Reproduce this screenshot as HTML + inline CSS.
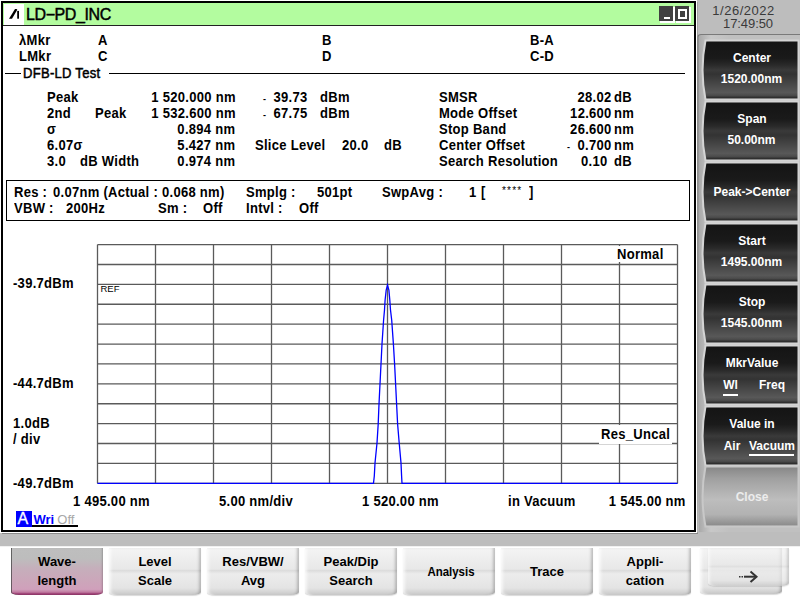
<!DOCTYPE html>
<html><head><meta charset="utf-8"><style>
html,body{margin:0;padding:0;}
body{width:800px;height:600px;overflow:hidden;position:relative;font-family:"Liberation Sans", sans-serif;background:#bdbdbd;}
.r{position:absolute;}
.t{position:absolute;white-space:pre;}
</style></head><body>
<div class="r" style="left:0px;top:0px;width:697px;height:533px;background:#fff;"></div>
<div class="r" style="left:697px;top:2px;width:1px;height:532px;background:#a4a4a4;"></div>
<div class="r" style="left:2px;top:533px;width:696px;height:1px;background:#8a8a8a;"></div>
<div class="r" style="left:1px;top:1px;width:695px;height:531px;border:2px solid #000;box-sizing:border-box;background:#fff;"></div>
<div class="r" style="left:3px;top:3px;width:691px;height:22px;background:#b3fc9f;"></div>
<div class="r" style="left:3px;top:25px;width:691px;height:1px;background:#222;"></div>
<div class="r" style="left:4px;top:4px;width:20px;height:21px;background:#fff;"></div>
<svg class="r" style="left:0;top:0" width="800" height="600"><polygon points="9,18.7 12,18.7 17.3,9.8 16.6,8.9 15,8.9" fill="#000"/><rect x="17.2" y="10.9" width="1.8" height="7.8" fill="#000"/></svg>
<div class="r" style="left:660px;top:7px;width:15px;height:15.5px;background:#fff;"></div>
<div class="r" style="left:659px;top:6px;width:14px;height:15px;background:#404040;"></div>
<div class="r" style="left:664px;top:17px;width:6px;height:2px;background:#fff;"></div>
<div class="r" style="left:676px;top:7px;width:15px;height:15.5px;background:#fff;"></div>
<div class="r" style="left:675px;top:6px;width:14px;height:15px;background:#404040;"></div>
<div class="r" style="left:678px;top:9px;width:9px;height:10px;border:2px solid #fff;box-sizing:border-box;"></div>
<div class="t" style="top:7px;font-size:16px;line-height:16px;font-weight:normal;color:#000;letter-spacing:-0.4px;left:26px;-webkit-text-stroke:0.45px #000;">LD&#8722;PD_INC</div>
<div class="t" style="top:4px;font-size:13px;line-height:13px;font-weight:normal;color:#3a3a3a;letter-spacing:0.5px;left:593.5px;width:300px;text-align:center;">1/26/2022</div>
<div class="t" style="top:17px;font-size:13px;line-height:13px;font-weight:normal;color:#3a3a3a;letter-spacing:-0.1px;left:598px;width:300px;text-align:center;">17:49:50</div>
<div class="t" style="top:33px;font-size:14px;line-height:14px;font-weight:bold;color:#000;letter-spacing:0.3px;left:18.5px;transform:scaleX(0.93);transform-origin:left 50%;">&#955;Mkr</div>
<div class="t" style="top:49px;font-size:14px;line-height:14px;font-weight:bold;color:#000;letter-spacing:0.3px;left:18.5px;transform:scaleX(0.93);transform-origin:left 50%;">LMkr</div>
<div class="t" style="top:33px;font-size:14px;line-height:14px;font-weight:bold;color:#000;letter-spacing:0.3px;left:97.5px;transform:scaleX(0.93);transform-origin:left 50%;">A</div>
<div class="t" style="top:49px;font-size:14px;line-height:14px;font-weight:bold;color:#000;letter-spacing:0.3px;left:97.5px;transform:scaleX(0.93);transform-origin:left 50%;">C</div>
<div class="t" style="top:33px;font-size:14px;line-height:14px;font-weight:bold;color:#000;letter-spacing:0.3px;left:321.5px;transform:scaleX(0.93);transform-origin:left 50%;">B</div>
<div class="t" style="top:49px;font-size:14px;line-height:14px;font-weight:bold;color:#000;letter-spacing:0.3px;left:321.5px;transform:scaleX(0.93);transform-origin:left 50%;">D</div>
<div class="t" style="top:33px;font-size:14px;line-height:14px;font-weight:bold;color:#000;letter-spacing:0.3px;left:529.5px;transform:scaleX(0.93);transform-origin:left 50%;">B-A</div>
<div class="t" style="top:49px;font-size:14px;line-height:14px;font-weight:bold;color:#000;letter-spacing:0.3px;left:529.5px;transform:scaleX(0.93);transform-origin:left 50%;">C-D</div>
<div class="r" style="left:5px;top:73px;width:16px;height:1px;background:#000;"></div>
<div class="r" style="left:109px;top:73px;width:576px;height:1px;background:#000;"></div>
<div class="t" style="top:66px;font-size:14px;line-height:14px;font-weight:normal;color:#000;letter-spacing:0.3px;left:22.5px;transform:scaleX(0.93);transform-origin:left 50%;-webkit-text-stroke:0.5px #000;">DFB-LD Test</div>
<div class="t" style="top:90px;font-size:14px;line-height:14px;font-weight:bold;color:#000;letter-spacing:0.3px;left:47.0px;transform:scaleX(0.93);transform-origin:left 50%;">Peak</div>
<div class="t" style="top:106px;font-size:14px;line-height:14px;font-weight:bold;color:#000;letter-spacing:0.3px;left:47.0px;transform:scaleX(0.93);transform-origin:left 50%;">2nd</div>
<div class="t" style="top:106px;font-size:14px;line-height:14px;font-weight:bold;color:#000;letter-spacing:0.3px;left:95.0px;transform:scaleX(0.93);transform-origin:left 50%;">Peak</div>
<div class="t" style="top:122px;font-size:14px;line-height:14px;font-weight:bold;color:#000;letter-spacing:0.3px;left:47.0px;transform:scaleX(0.93);transform-origin:left 50%;">&#963;</div>
<div class="t" style="top:138px;font-size:14px;line-height:14px;font-weight:bold;color:#000;letter-spacing:0.3px;left:47.0px;transform:scaleX(0.93);transform-origin:left 50%;">6.07&#963;</div>
<div class="t" style="top:154px;font-size:14px;line-height:14px;font-weight:bold;color:#000;letter-spacing:0.3px;left:47.0px;transform:scaleX(0.93);transform-origin:left 50%;">3.0</div>
<div class="t" style="top:154px;font-size:14px;line-height:14px;font-weight:bold;color:#000;letter-spacing:0.3px;left:79.5px;transform:scaleX(0.93);transform-origin:left 50%;">dB Width</div>
<div class="t" style="top:90px;font-size:14px;line-height:14px;font-weight:bold;color:#000;letter-spacing:0.3px;right:564.5px;transform:scaleX(0.93);transform-origin:right 50%;">1 520.000 nm</div>
<div class="t" style="top:106px;font-size:14px;line-height:14px;font-weight:bold;color:#000;letter-spacing:0.3px;right:564.5px;transform:scaleX(0.93);transform-origin:right 50%;">1 532.600 nm</div>
<div class="t" style="top:122px;font-size:14px;line-height:14px;font-weight:bold;color:#000;letter-spacing:0.3px;right:564.5px;transform:scaleX(0.93);transform-origin:right 50%;">0.894 nm</div>
<div class="t" style="top:138px;font-size:14px;line-height:14px;font-weight:bold;color:#000;letter-spacing:0.3px;right:564.5px;transform:scaleX(0.93);transform-origin:right 50%;">5.427 nm</div>
<div class="t" style="top:154px;font-size:14px;line-height:14px;font-weight:bold;color:#000;letter-spacing:0.3px;right:564.5px;transform:scaleX(0.93);transform-origin:right 50%;">0.974 nm</div>
<div class="t" style="top:95px;font-size:9px;line-height:9px;font-weight:bold;color:#000;letter-spacing:0.3px;left:263px;">-</div>
<div class="t" style="top:111px;font-size:9px;line-height:9px;font-weight:bold;color:#000;letter-spacing:0.3px;left:263px;">-</div>
<div class="t" style="top:90px;font-size:14px;line-height:14px;font-weight:bold;color:#000;letter-spacing:0.3px;right:492.5px;transform:scaleX(0.93);transform-origin:right 50%;">39.73</div>
<div class="t" style="top:106px;font-size:14px;line-height:14px;font-weight:bold;color:#000;letter-spacing:0.3px;right:492.5px;transform:scaleX(0.93);transform-origin:right 50%;">67.75</div>
<div class="t" style="top:90px;font-size:14px;line-height:14px;font-weight:bold;color:#000;letter-spacing:0.3px;left:319.5px;transform:scaleX(0.93);transform-origin:left 50%;">dBm</div>
<div class="t" style="top:106px;font-size:14px;line-height:14px;font-weight:bold;color:#000;letter-spacing:0.3px;left:319.5px;transform:scaleX(0.93);transform-origin:left 50%;">dBm</div>
<div class="t" style="top:138px;font-size:14px;line-height:14px;font-weight:bold;color:#000;letter-spacing:0.3px;left:255.0px;transform:scaleX(0.93);transform-origin:left 50%;">Slice Level</div>
<div class="t" style="top:138px;font-size:14px;line-height:14px;font-weight:bold;color:#000;letter-spacing:0.3px;right:431.5px;transform:scaleX(0.93);transform-origin:right 50%;">20.0</div>
<div class="t" style="top:138px;font-size:14px;line-height:14px;font-weight:bold;color:#000;letter-spacing:0.3px;left:383.5px;transform:scaleX(0.93);transform-origin:left 50%;">dB</div>
<div class="t" style="top:90px;font-size:14px;line-height:14px;font-weight:bold;color:#000;letter-spacing:0.3px;left:439.0px;transform:scaleX(0.93);transform-origin:left 50%;">SMSR</div>
<div class="t" style="top:106px;font-size:14px;line-height:14px;font-weight:bold;color:#000;letter-spacing:0.3px;left:439.0px;transform:scaleX(0.93);transform-origin:left 50%;">Mode Offset</div>
<div class="t" style="top:122px;font-size:14px;line-height:14px;font-weight:bold;color:#000;letter-spacing:0.3px;left:439.0px;transform:scaleX(0.93);transform-origin:left 50%;">Stop Band</div>
<div class="t" style="top:138px;font-size:14px;line-height:14px;font-weight:bold;color:#000;letter-spacing:0.3px;left:439.0px;transform:scaleX(0.93);transform-origin:left 50%;">Center Offset</div>
<div class="t" style="top:154px;font-size:14px;line-height:14px;font-weight:bold;color:#000;letter-spacing:0.3px;left:439.0px;transform:scaleX(0.93);transform-origin:left 50%;">Search Resolution</div>
<div class="t" style="top:90px;font-size:14px;line-height:14px;font-weight:bold;color:#000;letter-spacing:0.3px;right:188.5px;transform:scaleX(0.93);transform-origin:right 50%;">28.02</div>
<div class="t" style="top:90px;font-size:14px;line-height:14px;font-weight:bold;color:#000;letter-spacing:0.3px;left:613.5px;transform:scaleX(0.93);transform-origin:left 50%;">dB</div>
<div class="t" style="top:106px;font-size:14px;line-height:14px;font-weight:bold;color:#000;letter-spacing:0.3px;right:188.5px;transform:scaleX(0.93);transform-origin:right 50%;">12.600</div>
<div class="t" style="top:106px;font-size:14px;line-height:14px;font-weight:bold;color:#000;letter-spacing:0.3px;left:613.5px;transform:scaleX(0.93);transform-origin:left 50%;">nm</div>
<div class="t" style="top:122px;font-size:14px;line-height:14px;font-weight:bold;color:#000;letter-spacing:0.3px;right:188.5px;transform:scaleX(0.93);transform-origin:right 50%;">26.600</div>
<div class="t" style="top:122px;font-size:14px;line-height:14px;font-weight:bold;color:#000;letter-spacing:0.3px;left:613.5px;transform:scaleX(0.93);transform-origin:left 50%;">nm</div>
<div class="t" style="top:138px;font-size:14px;line-height:14px;font-weight:bold;color:#000;letter-spacing:0.3px;right:188.5px;transform:scaleX(0.93);transform-origin:right 50%;">0.700</div>
<div class="t" style="top:138px;font-size:14px;line-height:14px;font-weight:bold;color:#000;letter-spacing:0.3px;left:613.5px;transform:scaleX(0.93);transform-origin:left 50%;">nm</div>
<div class="t" style="top:143px;font-size:9px;line-height:9px;font-weight:bold;color:#000;letter-spacing:0.3px;left:567px;">-</div>
<div class="t" style="top:154px;font-size:14px;line-height:14px;font-weight:bold;color:#000;letter-spacing:0.3px;right:192.5px;transform:scaleX(0.93);transform-origin:right 50%;">0.10</div>
<div class="t" style="top:154px;font-size:14px;line-height:14px;font-weight:bold;color:#000;letter-spacing:0.3px;left:613.5px;transform:scaleX(0.93);transform-origin:left 50%;">dB</div>
<div class="r" style="left:6px;top:180px;width:684px;height:41px;border:1px solid #000;box-sizing:border-box;"></div>
<div class="t" style="top:185px;font-size:14px;line-height:14px;font-weight:bold;color:#000;letter-spacing:0.3px;left:14.25px;transform:scaleX(0.93);transform-origin:left 50%;">Res :</div>
<div class="t" style="top:185px;font-size:14px;line-height:14px;font-weight:bold;color:#000;letter-spacing:0.3px;left:53.0px;transform:scaleX(0.93);transform-origin:left 50%;">0.07nm (Actual :</div>
<div class="t" style="top:185px;font-size:14px;line-height:14px;font-weight:bold;color:#000;letter-spacing:0.3px;left:161.5px;transform:scaleX(0.93);transform-origin:left 50%;">0.068 nm)</div>
<div class="t" style="top:185px;font-size:14px;line-height:14px;font-weight:bold;color:#000;letter-spacing:0.3px;left:245.5px;transform:scaleX(0.93);transform-origin:left 50%;">Smplg :</div>
<div class="t" style="top:185px;font-size:14px;line-height:14px;font-weight:bold;color:#000;letter-spacing:0.3px;left:316.5px;transform:scaleX(0.93);transform-origin:left 50%;">501pt</div>
<div class="t" style="top:185px;font-size:14px;line-height:14px;font-weight:bold;color:#000;letter-spacing:0.3px;left:382.0px;transform:scaleX(0.93);transform-origin:left 50%;">SwpAvg :</div>
<div class="t" style="top:185px;font-size:14px;line-height:14px;font-weight:bold;color:#000;letter-spacing:0.3px;left:468.5px;transform:scaleX(0.93);transform-origin:left 50%;">1</div>
<div class="t" style="top:185px;font-size:14px;line-height:14px;font-weight:bold;color:#000;letter-spacing:0.3px;left:480.5px;transform:scaleX(0.93);transform-origin:left 50%;">[</div>
<div class="t" style="top:186px;font-size:10px;line-height:10px;font-weight:normal;color:#000;letter-spacing:1.2px;left:502px;">****</div>
<div class="t" style="top:185px;font-size:14px;line-height:14px;font-weight:bold;color:#000;letter-spacing:0.3px;left:529.0px;transform:scaleX(0.93);transform-origin:left 50%;">]</div>
<div class="t" style="top:201px;font-size:14px;line-height:14px;font-weight:bold;color:#000;letter-spacing:0.3px;left:14.25px;transform:scaleX(0.93);transform-origin:left 50%;">VBW :</div>
<div class="t" style="top:201px;font-size:14px;line-height:14px;font-weight:bold;color:#000;letter-spacing:0.3px;left:65.5px;transform:scaleX(0.93);transform-origin:left 50%;">200Hz</div>
<div class="t" style="top:201px;font-size:14px;line-height:14px;font-weight:bold;color:#000;letter-spacing:0.3px;left:157.5px;transform:scaleX(0.93);transform-origin:left 50%;">Sm :</div>
<div class="t" style="top:201px;font-size:14px;line-height:14px;font-weight:bold;color:#000;letter-spacing:0.3px;left:202.5px;transform:scaleX(0.93);transform-origin:left 50%;">Off</div>
<div class="t" style="top:201px;font-size:14px;line-height:14px;font-weight:bold;color:#000;letter-spacing:0.3px;left:245.5px;transform:scaleX(0.93);transform-origin:left 50%;">Intvl :</div>
<div class="t" style="top:201px;font-size:14px;line-height:14px;font-weight:bold;color:#000;letter-spacing:0.3px;left:299.0px;transform:scaleX(0.93);transform-origin:left 50%;">Off</div>
<svg class="r" style="left:0;top:0" width="800" height="600"><line x1="97.5" y1="244.60" x2="97.5" y2="483.30" stroke="#5a5a5a" stroke-width="1.3"/><line x1="155.5" y1="244.60" x2="155.5" y2="483.30" stroke="#5a5a5a" stroke-width="1.3"/><line x1="213.5" y1="244.60" x2="213.5" y2="483.30" stroke="#5a5a5a" stroke-width="1.3"/><line x1="271.5" y1="244.60" x2="271.5" y2="483.30" stroke="#5a5a5a" stroke-width="1.3"/><line x1="329.5" y1="244.60" x2="329.5" y2="483.30" stroke="#5a5a5a" stroke-width="1.3"/><line x1="387.5" y1="244.60" x2="387.5" y2="483.30" stroke="#5a5a5a" stroke-width="1.3"/><line x1="445.5" y1="244.60" x2="445.5" y2="483.30" stroke="#5a5a5a" stroke-width="1.3"/><line x1="503.5" y1="244.60" x2="503.5" y2="483.30" stroke="#5a5a5a" stroke-width="1.3"/><line x1="561.5" y1="244.60" x2="561.5" y2="483.30" stroke="#5a5a5a" stroke-width="1.3"/><line x1="619.5" y1="244.60" x2="619.5" y2="483.30" stroke="#5a5a5a" stroke-width="1.3"/><line x1="677.5" y1="244.60" x2="677.5" y2="483.30" stroke="#5a5a5a" stroke-width="1.3"/><line x1="97.5" y1="244.60" x2="677.5" y2="244.60" stroke="#5a5a5a" stroke-width="1.3"/><line x1="97.5" y1="264.49" x2="677.5" y2="264.49" stroke="#5a5a5a" stroke-width="1.3"/><line x1="97.5" y1="284.38" x2="677.5" y2="284.38" stroke="#5a5a5a" stroke-width="1.3"/><line x1="97.5" y1="304.27" x2="677.5" y2="304.27" stroke="#5a5a5a" stroke-width="1.3"/><line x1="97.5" y1="324.17" x2="677.5" y2="324.17" stroke="#5a5a5a" stroke-width="1.3"/><line x1="97.5" y1="344.06" x2="677.5" y2="344.06" stroke="#5a5a5a" stroke-width="1.3"/><line x1="97.5" y1="363.95" x2="677.5" y2="363.95" stroke="#5a5a5a" stroke-width="1.3"/><line x1="97.5" y1="383.84" x2="677.5" y2="383.84" stroke="#5a5a5a" stroke-width="1.3"/><line x1="97.5" y1="403.73" x2="677.5" y2="403.73" stroke="#5a5a5a" stroke-width="1.3"/><line x1="97.5" y1="423.62" x2="677.5" y2="423.62" stroke="#5a5a5a" stroke-width="1.3"/><line x1="97.5" y1="443.52" x2="677.5" y2="443.52" stroke="#5a5a5a" stroke-width="1.3"/><line x1="97.5" y1="463.41" x2="677.5" y2="463.41" stroke="#5a5a5a" stroke-width="1.3"/><line x1="97.5" y1="483.30" x2="677.5" y2="483.30" stroke="#5a5a5a" stroke-width="1.3"/></svg>
<div class="r" style="left:600px;top:245.5px;width:72px;height:16.5px;background:#fff;"></div>
<div class="r" style="left:599px;top:424.5px;width:73px;height:19px;background:#fff;"></div>
<div class="t" style="top:247px;font-size:14px;line-height:14px;font-weight:bold;color:#000;letter-spacing:0.3px;left:617.0px;transform:scaleX(0.93);transform-origin:left 50%;">Normal</div>
<div class="t" style="top:427px;font-size:14px;line-height:14px;font-weight:bold;color:#000;letter-spacing:0.3px;left:601.0px;transform:scaleX(0.93);transform-origin:left 50%;">Res_Uncal</div>
<div class="t" style="top:284px;font-size:9.5px;line-height:9.5px;font-weight:normal;color:#000;left:100.5px;">REF</div>
<svg class="r" style="left:0;top:0" width="800" height="600"><polyline points="97.5,483.3 373.5,483.3 374.3,476 375,463 377,443 378.2,424 379,404 380,384 381,364 382,344 383.6,320 384.5,310 385.1,300 386.2,290 387.5,285 388.9,290 389.8,300 390.5,310 391.7,320 393.4,344 394.6,364 395.6,384 396.6,404 397.6,424 399.2,443 401,463 401.6,476 402,483.3 677.5,483.3" fill="none" stroke="#0000ff" stroke-width="1.3"/></svg>
<div class="t" style="top:276px;font-size:14px;line-height:14px;font-weight:bold;color:#000;letter-spacing:0.3px;left:13.0px;transform:scaleX(0.93);transform-origin:left 50%;">-39.7dBm</div>
<div class="t" style="top:376px;font-size:14px;line-height:14px;font-weight:bold;color:#000;letter-spacing:0.3px;left:13.0px;transform:scaleX(0.93);transform-origin:left 50%;">-44.7dBm</div>
<div class="t" style="top:416px;font-size:14px;line-height:14px;font-weight:bold;color:#000;letter-spacing:0.3px;left:13.0px;transform:scaleX(0.93);transform-origin:left 50%;">1.0dB</div>
<div class="t" style="top:432px;font-size:14px;line-height:14px;font-weight:bold;color:#000;letter-spacing:0.3px;left:13.0px;transform:scaleX(0.93);transform-origin:left 50%;">/ div</div>
<div class="t" style="top:476px;font-size:14px;line-height:14px;font-weight:bold;color:#000;letter-spacing:0.3px;left:13.0px;transform:scaleX(0.93);transform-origin:left 50%;">-49.7dBm</div>
<div class="t" style="top:494px;font-size:14px;line-height:14px;font-weight:bold;color:#000;letter-spacing:0.3px;left:72.5px;transform:scaleX(0.93);transform-origin:left 50%;">1 495.00 nm</div>
<div class="t" style="top:494px;font-size:14px;line-height:14px;font-weight:bold;color:#000;letter-spacing:0.3px;left:219.2px;transform:scaleX(0.93);transform-origin:left 50%;">5.00 nm/div</div>
<div class="t" style="top:494px;font-size:14px;line-height:14px;font-weight:bold;color:#000;letter-spacing:0.3px;left:362.0px;transform:scaleX(0.93);transform-origin:left 50%;">1 520.00 nm</div>
<div class="t" style="top:494px;font-size:14px;line-height:14px;font-weight:bold;color:#000;letter-spacing:0.3px;left:508.25px;transform:scaleX(0.93);transform-origin:left 50%;">in Vacuum</div>
<div class="t" style="top:494px;font-size:14px;line-height:14px;font-weight:bold;color:#000;letter-spacing:0.3px;right:114.0px;transform:scaleX(0.93);transform-origin:right 50%;">1 545.00 nm</div>
<div class="r" style="left:16px;top:511px;width:16px;height:15.5px;background:#0000ff;"></div>
<div class="t" style="top:511px;font-size:16px;line-height:16px;font-weight:normal;color:#fff;left:17.5px;-webkit-text-stroke:0.3px #fff;">A</div>
<div class="t" style="top:513px;font-size:13px;line-height:13px;font-weight:bold;color:#0000ff;left:33.4px;">Wri</div>
<div class="t" style="top:513px;font-size:13px;line-height:13px;font-weight:normal;color:#a8a8a8;left:57.3px;">Off</div>
<div class="r" style="left:32px;top:525px;width:46px;height:2px;background:#000;"></div>
<svg class="r" style="left:0;top:0" width="800" height="600"><defs><linearGradient id="pf" x1="0" y1="0" x2="1" y2="0"><stop offset="0" stop-color="#a8a8a8"/><stop offset="0.12" stop-color="#c8c8c8"/><stop offset="0.3" stop-color="#c0c0c0"/><stop offset="1" stop-color="#c0c0c0"/></linearGradient></defs><defs><linearGradient id="pfv" x1="0" y1="0" x2="0" y2="1"><stop offset="0" stop-color="#7a7a7a"/><stop offset="0.85" stop-color="#9a9a9a"/><stop offset="1" stop-color="#bdbdbd"/></linearGradient></defs><rect x="698.6" y="35.1" width="102" height="497" fill="url(#pf)"/><path d="M698 532 L698 37 Q698 34.5 701 34.5 L800 34.5" fill="none" stroke="url(#pfv)" stroke-width="1.2"/></svg>
<svg class="r" style="left:0;top:0" width="800" height="600"><defs><linearGradient id="g40" x1="0" y1="0" x2="0" y2="1"><stop offset="0" stop-color="#141414"/><stop offset="0.3" stop-color="#1a1a1a"/><stop offset="0.42" stop-color="#2a2a2a"/><stop offset="0.5" stop-color="#3a3a3a"/><stop offset="0.57" stop-color="#333333"/><stop offset="0.88" stop-color="#585858"/><stop offset="0.93" stop-color="#4c4c4c"/><stop offset="0.97" stop-color="#2c2c2c"/><stop offset="1" stop-color="#3a3a3a"/></linearGradient></defs><path d="M 798.5 40.5 L 705.5 40.5 Q 699.6 70.0 705.5 99.5 L 798.5 99.5 Z" fill="url(#g40)" stroke="#d4d4d4" stroke-width="2"/></svg>
<div class="t" style="top:52px;font-size:12px;line-height:12px;font-weight:bold;color:#fff;left:602px;width:300px;text-align:center;">Center</div>
<div class="t" style="top:73px;font-size:12px;line-height:12px;font-weight:bold;color:#fff;left:601.5px;width:300px;text-align:center;">1520.00nm</div>
<svg class="r" style="left:0;top:0" width="800" height="600"><defs><linearGradient id="g101" x1="0" y1="0" x2="0" y2="1"><stop offset="0" stop-color="#141414"/><stop offset="0.3" stop-color="#1a1a1a"/><stop offset="0.42" stop-color="#2a2a2a"/><stop offset="0.5" stop-color="#3a3a3a"/><stop offset="0.57" stop-color="#333333"/><stop offset="0.88" stop-color="#585858"/><stop offset="0.93" stop-color="#4c4c4c"/><stop offset="0.97" stop-color="#2c2c2c"/><stop offset="1" stop-color="#3a3a3a"/></linearGradient></defs><path d="M 798.5 101.5 L 705.5 101.5 Q 699.6 131.0 705.5 160.5 L 798.5 160.5 Z" fill="url(#g101)" stroke="#d4d4d4" stroke-width="2"/></svg>
<div class="t" style="top:113px;font-size:12px;line-height:12px;font-weight:bold;color:#fff;left:602px;width:300px;text-align:center;">Span</div>
<div class="t" style="top:134px;font-size:12px;line-height:12px;font-weight:bold;color:#fff;left:601.5px;width:300px;text-align:center;">50.00nm</div>
<svg class="r" style="left:0;top:0" width="800" height="600"><defs><linearGradient id="g162" x1="0" y1="0" x2="0" y2="1"><stop offset="0" stop-color="#141414"/><stop offset="0.3" stop-color="#1a1a1a"/><stop offset="0.42" stop-color="#2a2a2a"/><stop offset="0.5" stop-color="#3a3a3a"/><stop offset="0.57" stop-color="#333333"/><stop offset="0.88" stop-color="#585858"/><stop offset="0.93" stop-color="#4c4c4c"/><stop offset="0.97" stop-color="#2c2c2c"/><stop offset="1" stop-color="#3a3a3a"/></linearGradient></defs><path d="M 798.5 162.5 L 705.5 162.5 Q 699.6 192.0 705.5 221.5 L 798.5 221.5 Z" fill="url(#g162)" stroke="#d4d4d4" stroke-width="2"/></svg>
<div class="t" style="top:186px;font-size:12px;line-height:12px;font-weight:bold;color:#fff;left:602px;width:300px;text-align:center;">Peak-&gt;Center</div>
<svg class="r" style="left:0;top:0" width="800" height="600"><defs><linearGradient id="g223" x1="0" y1="0" x2="0" y2="1"><stop offset="0" stop-color="#141414"/><stop offset="0.3" stop-color="#1a1a1a"/><stop offset="0.42" stop-color="#2a2a2a"/><stop offset="0.5" stop-color="#3a3a3a"/><stop offset="0.57" stop-color="#333333"/><stop offset="0.88" stop-color="#585858"/><stop offset="0.93" stop-color="#4c4c4c"/><stop offset="0.97" stop-color="#2c2c2c"/><stop offset="1" stop-color="#3a3a3a"/></linearGradient></defs><path d="M 798.5 223.5 L 705.5 223.5 Q 699.6 253.0 705.5 282.5 L 798.5 282.5 Z" fill="url(#g223)" stroke="#d4d4d4" stroke-width="2"/></svg>
<div class="t" style="top:235px;font-size:12px;line-height:12px;font-weight:bold;color:#fff;left:602px;width:300px;text-align:center;">Start</div>
<div class="t" style="top:256px;font-size:12px;line-height:12px;font-weight:bold;color:#fff;left:601.5px;width:300px;text-align:center;">1495.00nm</div>
<svg class="r" style="left:0;top:0" width="800" height="600"><defs><linearGradient id="g284" x1="0" y1="0" x2="0" y2="1"><stop offset="0" stop-color="#141414"/><stop offset="0.3" stop-color="#1a1a1a"/><stop offset="0.42" stop-color="#2a2a2a"/><stop offset="0.5" stop-color="#3a3a3a"/><stop offset="0.57" stop-color="#333333"/><stop offset="0.88" stop-color="#585858"/><stop offset="0.93" stop-color="#4c4c4c"/><stop offset="0.97" stop-color="#2c2c2c"/><stop offset="1" stop-color="#3a3a3a"/></linearGradient></defs><path d="M 798.5 284.5 L 705.5 284.5 Q 699.6 314.0 705.5 343.5 L 798.5 343.5 Z" fill="url(#g284)" stroke="#d4d4d4" stroke-width="2"/></svg>
<div class="t" style="top:296px;font-size:12px;line-height:12px;font-weight:bold;color:#fff;left:602px;width:300px;text-align:center;">Stop</div>
<div class="t" style="top:317px;font-size:12px;line-height:12px;font-weight:bold;color:#fff;left:601.5px;width:300px;text-align:center;">1545.00nm</div>
<svg class="r" style="left:0;top:0" width="800" height="600"><defs><linearGradient id="g345" x1="0" y1="0" x2="0" y2="1"><stop offset="0" stop-color="#141414"/><stop offset="0.3" stop-color="#1a1a1a"/><stop offset="0.42" stop-color="#2a2a2a"/><stop offset="0.5" stop-color="#3a3a3a"/><stop offset="0.57" stop-color="#333333"/><stop offset="0.88" stop-color="#585858"/><stop offset="0.93" stop-color="#4c4c4c"/><stop offset="0.97" stop-color="#2c2c2c"/><stop offset="1" stop-color="#3a3a3a"/></linearGradient></defs><path d="M 798.5 345.5 L 705.5 345.5 Q 699.6 375.0 705.5 404.5 L 798.5 404.5 Z" fill="url(#g345)" stroke="#d4d4d4" stroke-width="2"/></svg>
<div class="t" style="top:357px;font-size:12px;line-height:12px;font-weight:bold;color:#fff;left:602px;width:300px;text-align:center;">MkrValue</div>
<div class="t" style="top:379px;font-size:12px;line-height:12px;font-weight:bold;color:#fff;left:580.5px;width:300px;text-align:center;">Wl</div>
<div class="t" style="top:379px;font-size:12px;line-height:12px;font-weight:bold;color:#fff;left:622px;width:300px;text-align:center;">Freq</div>
<svg class="r" style="left:0;top:0" width="800" height="600"><defs><linearGradient id="g406" x1="0" y1="0" x2="0" y2="1"><stop offset="0" stop-color="#141414"/><stop offset="0.3" stop-color="#1a1a1a"/><stop offset="0.42" stop-color="#2a2a2a"/><stop offset="0.5" stop-color="#3a3a3a"/><stop offset="0.57" stop-color="#333333"/><stop offset="0.88" stop-color="#585858"/><stop offset="0.93" stop-color="#4c4c4c"/><stop offset="0.97" stop-color="#2c2c2c"/><stop offset="1" stop-color="#3a3a3a"/></linearGradient></defs><path d="M 798.5 406.5 L 705.5 406.5 Q 699.6 436.0 705.5 465.5 L 798.5 465.5 Z" fill="url(#g406)" stroke="#d4d4d4" stroke-width="2"/></svg>
<div class="t" style="top:418px;font-size:12px;line-height:12px;font-weight:bold;color:#fff;left:602px;width:300px;text-align:center;">Value in</div>
<div class="t" style="top:440px;font-size:12px;line-height:12px;font-weight:bold;color:#fff;left:582px;width:300px;text-align:center;">Air</div>
<div class="t" style="top:440px;font-size:12px;line-height:12px;font-weight:bold;color:#fff;left:622px;width:300px;text-align:center;">Vacuum</div>
<svg class="r" style="left:0;top:0" width="800" height="600"><defs><linearGradient id="g466" x1="0" y1="0" x2="0" y2="1"><stop offset="0" stop-color="#868686"/><stop offset="0.2" stop-color="#a0a0a0"/><stop offset="0.55" stop-color="#bdbdbd"/><stop offset="0.8" stop-color="#b2b2b2"/><stop offset="0.97" stop-color="#8e8e8e"/><stop offset="1" stop-color="#9a9a9a"/></linearGradient></defs><path d="M 798.5 466.5 L 705.5 466.5 Q 699.6 496.5 705.5 526.5 L 798.5 526.5 Z" fill="url(#g466)" stroke="#c8c8c8" stroke-width="2"/></svg>
<div class="t" style="top:491px;font-size:12px;line-height:12px;font-weight:bold;color:#ececec;left:602px;width:300px;text-align:center;">Close</div>
<div class="r" style="left:723px;top:394px;width:15px;height:2px;background:#fff;"></div>
<div class="r" style="left:749px;top:454px;width:45px;height:2px;background:#fff;"></div>
<div class="r" style="left:0px;top:546px;width:800px;height:1px;background:#f0f0f0;"></div>
<div class="r" style="left:0px;top:547px;width:800px;height:53px;background:#fff;"></div>
<div class="r" style="left:11px;top:548px;width:92px;height:47px;background:linear-gradient(#bebebe 0%,#bdbdbd 22%,#c6aebb 45%,#cca6ba 70%,#d0a0bb 88%,#c07aa0 94%,#a04478 97%,#8a3464 100%);border-radius:0 0 8px 8px/0 0 3px 3px;box-shadow:inset 1px 0 0 0 rgba(60,60,60,0.7), inset -2px 0 2px -1px rgba(0,0,0,0.2);"></div>
<div class="t" style="top:555px;font-size:13px;line-height:13px;font-weight:bold;color:#000;left:-93px;width:300px;text-align:center;">Wave-</div>
<div class="t" style="top:574px;font-size:13px;line-height:13px;font-weight:bold;color:#000;left:-93px;width:300px;text-align:center;">length</div>
<div class="r" style="left:109px;top:548px;width:92px;height:47px;background:linear-gradient(#f4f4f4 0%,#e8e8e8 45%,#dcdcdc 48%,#ececec 55%,#e4e4e4 85%,#c8c8c8 100%);border-radius:0 0 8px 8px/0 0 3px 3px;box-shadow:inset -3px 0 3px -1px rgba(0,0,0,0.22), inset 3px 0 3px -1px rgba(255,255,255,0.7), 0 1px 1px rgba(0,0,0,0.15);"></div>
<div class="t" style="top:555px;font-size:13px;line-height:13px;font-weight:bold;color:#000;left:5px;width:300px;text-align:center;">Level</div>
<div class="t" style="top:574px;font-size:13px;line-height:13px;font-weight:bold;color:#000;left:5px;width:300px;text-align:center;">Scale</div>
<div class="r" style="left:207px;top:548px;width:92px;height:47px;background:linear-gradient(#f4f4f4 0%,#e8e8e8 45%,#dcdcdc 48%,#ececec 55%,#e4e4e4 85%,#c8c8c8 100%);border-radius:0 0 8px 8px/0 0 3px 3px;box-shadow:inset -3px 0 3px -1px rgba(0,0,0,0.22), inset 3px 0 3px -1px rgba(255,255,255,0.7), 0 1px 1px rgba(0,0,0,0.15);"></div>
<div class="t" style="top:555px;font-size:13px;line-height:13px;font-weight:bold;color:#000;left:103px;width:300px;text-align:center;">Res/VBW/</div>
<div class="t" style="top:574px;font-size:13px;line-height:13px;font-weight:bold;color:#000;left:103px;width:300px;text-align:center;">Avg</div>
<div class="r" style="left:305px;top:548px;width:92px;height:47px;background:linear-gradient(#f4f4f4 0%,#e8e8e8 45%,#dcdcdc 48%,#ececec 55%,#e4e4e4 85%,#c8c8c8 100%);border-radius:0 0 8px 8px/0 0 3px 3px;box-shadow:inset -3px 0 3px -1px rgba(0,0,0,0.22), inset 3px 0 3px -1px rgba(255,255,255,0.7), 0 1px 1px rgba(0,0,0,0.15);"></div>
<div class="t" style="top:555px;font-size:13px;line-height:13px;font-weight:bold;color:#000;left:201px;width:300px;text-align:center;">Peak/Dip</div>
<div class="t" style="top:574px;font-size:13px;line-height:13px;font-weight:bold;color:#000;left:201px;width:300px;text-align:center;">Search</div>
<div class="r" style="left:403px;top:548px;width:92px;height:47px;background:linear-gradient(#f4f4f4 0%,#e8e8e8 45%,#dcdcdc 48%,#ececec 55%,#e4e4e4 85%,#c8c8c8 100%);border-radius:0 0 8px 8px/0 0 3px 3px;box-shadow:inset -3px 0 3px -1px rgba(0,0,0,0.22), inset 3px 0 3px -1px rgba(255,255,255,0.7), 0 1px 1px rgba(0,0,0,0.15);"></div>
<div class="t" style="top:565px;font-size:13px;line-height:13px;font-weight:bold;color:#000;left:300.5px;width:300px;text-align:center;transform:scaleX(0.88);transform-origin:center 50%;">Analysis</div>
<div class="r" style="left:501px;top:548px;width:92px;height:47px;background:linear-gradient(#f4f4f4 0%,#e8e8e8 45%,#dcdcdc 48%,#ececec 55%,#e4e4e4 85%,#c8c8c8 100%);border-radius:0 0 8px 8px/0 0 3px 3px;box-shadow:inset -3px 0 3px -1px rgba(0,0,0,0.22), inset 3px 0 3px -1px rgba(255,255,255,0.7), 0 1px 1px rgba(0,0,0,0.15);"></div>
<div class="t" style="top:565px;font-size:13px;line-height:13px;font-weight:bold;color:#000;left:397px;width:300px;text-align:center;">Trace</div>
<div class="r" style="left:599px;top:548px;width:92px;height:47px;background:linear-gradient(#f4f4f4 0%,#e8e8e8 45%,#dcdcdc 48%,#ececec 55%,#e4e4e4 85%,#c8c8c8 100%);border-radius:0 0 8px 8px/0 0 3px 3px;box-shadow:inset -3px 0 3px -1px rgba(0,0,0,0.22), inset 3px 0 3px -1px rgba(255,255,255,0.7), 0 1px 1px rgba(0,0,0,0.15);"></div>
<div class="t" style="top:555px;font-size:13px;line-height:13px;font-weight:bold;color:#000;left:495px;width:300px;text-align:center;">Appli-</div>
<div class="t" style="top:574px;font-size:13px;line-height:13px;font-weight:bold;color:#000;left:495px;width:300px;text-align:center;">cation</div>
<div class="r" style="left:700px;top:548px;width:82px;height:46px;background:linear-gradient(#f4f4f4 0%,#e8e8e8 45%,#dcdcdc 48%,#ececec 55%,#e4e4e4 85%,#c8c8c8 100%);border-radius:0 0 8px 8px/0 0 3px 3px;box-shadow:inset -3px 0 3px -1px rgba(0,0,0,0.22), inset 3px 0 3px -1px rgba(255,255,255,0.7), 0 1px 1px rgba(0,0,0,0.15);"></div>
<div class="r" style="left:708px;top:548px;width:81px;height:38px;background:linear-gradient(#f4f4f4 0%,#e8e8e8 45%,#dcdcdc 48%,#ececec 55%,#e4e4e4 85%,#c8c8c8 100%);border-radius:0 0 8px 8px/0 0 3px 3px;box-shadow:inset -3px 0 3px -1px rgba(0,0,0,0.22), inset 3px 0 3px -1px rgba(255,255,255,0.7), 0 1px 1px rgba(0,0,0,0.15);opacity:0.75;"></div>
<svg class="r" style="left:0;top:0" width="800" height="600"><g stroke="#333" stroke-width="2" fill="none"><line x1="744" y1="576.7" x2="756" y2="576.7"/><polyline points="750.5,571.5 756.5,576.7 750.5,582"/></g><rect x="739" y="576" width="1.5" height="1.5" fill="#333"/><rect x="741.5" y="576" width="1.5" height="1.5" fill="#333"/></svg>
</body></html>
